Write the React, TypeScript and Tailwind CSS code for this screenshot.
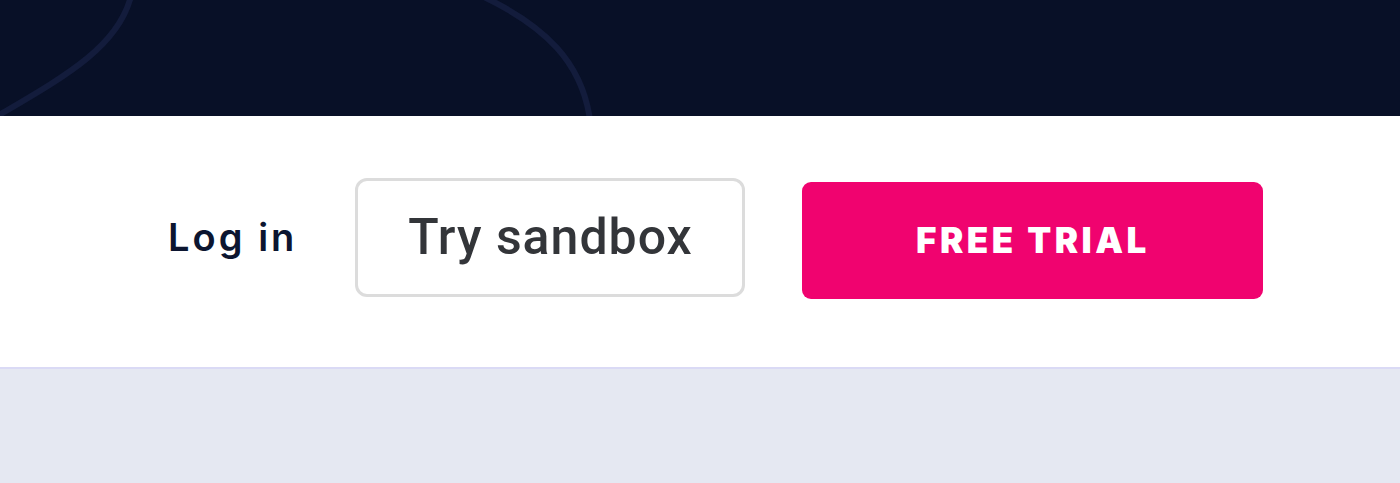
export default function App() {
  return (
    <div className="w-[1400px] h-[483px] overflow-hidden flex flex-col bg-[#e5e8f2]">
      {/* dark hero strip with faint curves */}
      <div className="relative h-[116px] shrink-0 bg-[#081027] overflow-hidden">
        <svg className="absolute inset-0" width="1400" height="116" viewBox="0 0 1400 116" fill="none">
          <path d="M -6 118 C 62 78, 118 48, 131 -4" stroke="#131c3c" strokeWidth="6" />
          <path d="M 482 -4 C 545 26, 582 62, 590 120" stroke="#131c3c" strokeWidth="6" />
        </svg>
      </div>

      {/* nav actions */}
      <div className="h-[253px] shrink-0 bg-white border-b-2 border-[#dadaf5] flex items-center pl-[168px]">
        <a
          href="#"
          className="text-[38px] font-semibold tracking-[0.08em] text-[#0c1530] leading-none mr-[58px] mb-[10px]"
          style={{ fontFamily: 'Inter, "Noto Sans", sans-serif' }}
        >
          Log in
        </a>
        <button
          className="w-[390px] h-[119px] border-[3px] border-[#dcdcdc] rounded-[12px] bg-white text-[#333539] text-[50px] font-medium tracking-[0.02em] flex items-center justify-center mr-[57px] mb-[8px]"
          style={{ fontFamily: 'Roboto, "Liberation Sans", sans-serif' }}
        >
          Try sandbox
        </button>
        <button
          className="w-[461px] h-[117px] rounded-[9px] bg-[#f0036f] text-white text-[35px] font-black tracking-[0.1em] flex items-center justify-center mb-[2px]"
          style={{ fontFamily: 'Inter, "Noto Sans", sans-serif' }}
        >
          FREE TRIAL
        </button>
      </div>
    </div>
  );
}
